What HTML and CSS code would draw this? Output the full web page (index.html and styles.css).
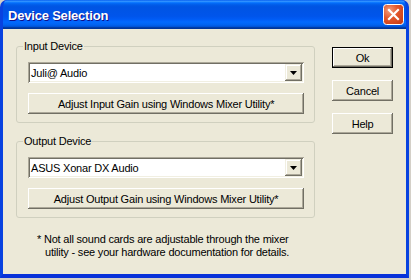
FILE: index.html
```html
<!DOCTYPE html>
<html lang="en">
<head>
  <meta charset="UTF-8">
  <title>Device Selection</title>
  <link rel="stylesheet" href="styles.css">
</head>
<body>
  <div class="window">
    <div class="titlebar">
      <span class="title">Device Selection</span>
      <button class="close" title="Close">
        <svg width="21" height="21" viewBox="0 0 21 21">
          <defs>
            <radialGradient id="closeBg" cx="0.3" cy="0.3" r="0.9">
              <stop offset="0" stop-color="#f39d7d"/>
              <stop offset="0.45" stop-color="#e2572c"/>
              <stop offset="1" stop-color="#c73a13"/>
            </radialGradient>
          </defs>
          <rect x="0.5" y="0.5" width="20" height="20" rx="3" fill="url(#closeBg)" stroke="#fff"/>
          <path d="M6 6 L15 15 M15 6 L6 15" stroke="#fff" stroke-width="2.2" stroke-linecap="square"/>
        </svg>
      </button>
    </div>

    <div class="client">
      <div class="groups">
        <fieldset class="group">
          <legend>Input Device</legend>
          <div class="combo">
            <span class="combo-value">Juli@ Audio</span>
            <span class="combo-arrow">
              <svg width="7" height="4" viewBox="0 0 7 4"><path d="M0 0 H7 L3.5 4 Z" fill="#000"/></svg>
            </span>
          </div>
          <button class="btn wide">Adjust Input Gain using Windows Mixer Utility*</button>
        </fieldset>

        <fieldset class="group">
          <legend>Output Device</legend>
          <div class="combo">
            <span class="combo-value">ASUS Xonar DX Audio</span>
            <span class="combo-arrow">
              <svg width="7" height="4" viewBox="0 0 7 4"><path d="M0 0 H7 L3.5 4 Z" fill="#000"/></svg>
            </span>
          </div>
          <button class="btn wide">Adjust Output Gain using Windows Mixer Utility*</button>
        </fieldset>

        <p class="note">* Not all sound cards are adjustable through the mixer<br><span class="indent">utility - see your hardware documentation for details.</span></p>
      </div>

      <div class="actions">
        <button class="btn default">Ok</button>
        <button class="btn">Cancel</button>
        <button class="btn">Help</button>
      </div>
    </div>
  </div>
</body>
</html>
```

FILE: styles.css
```css
/* classic XP dialog */
* {
  box-sizing: border-box;
}

html {
  background-color: #d4d0c8;
}

body {
  margin: 0;
  font-family: "Liberation Sans", Arial, sans-serif;
  font-size: 11px;
  letter-spacing: -0.2px;
  color: #000;
}

.window {
  width: 409px;
  height: 278px;
  display: flex;
  flex-direction: column;
  background-color: #0831d9;
  border-radius: 7px 7px 0 0;
  border-left: 3px solid #0842e0;
  border-right: 3px solid #0842e0;
  border-bottom: 4px solid #0831d9;
  overflow: hidden;
}

.titlebar {
  height: 29px;
  margin: 0 -3px;
  padding: 0 5px 0 8px;
  display: flex;
  align-items: center;
  justify-content: space-between;
  background: linear-gradient(to bottom, #0058ee 0%, #3593ff 4%, #288eff 6%, #127dff 8%, #036ffc 10%, #0262ee 14%, #0057e5 20%, #0054e3 24%, #0055eb 56%, #005bf5 66%, #026afe 76%, #0062ef 86%, #0052d6 92%, #0040ab 94%, #003092 100%);
}

.title {
  color: #fff;
  font-weight: bold;
  font-size: 13px;
  letter-spacing: -0.2px;
  text-shadow: 1px 1px #0f1089;
  padding-top: 1px;
}

.close {
  width: 21px;
  height: 21px;
  padding: 0;
  border: none;
  background: none;
  display: block;
}

.close svg {
  display: block;
}

.client {
  flex: 1;
  display: flex;
  gap: 17px;
  padding: 11px 13px 0 13px;
  background-color: #ece9d8;
}

.groups {
  width: 300px;
  display: flex;
  flex-direction: column;
}

.group {
  margin: 0 0 12px 0;
  padding: 9px 10px 8px 11px;
  border: 1px solid #d0d0bf;
  border-radius: 3px;
  display: flex;
  flex-direction: column;
  gap: 10px;
}

.group legend {
  padding: 0 1px;
  margin-left: -5px;
  line-height: 13px;
}

.combo {
  height: 21px;
  display: flex;
  align-items: center;
  background-color: #fff;
  padding: 2px;
  box-shadow: inset 1px 1px #aca899, inset -1px -1px #fff, inset 2px 2px #716f64, inset -2px -2px #f1efe2;
}

.combo-value {
  flex: 1;
  padding-left: 1px;
}

.combo-arrow {
  width: 17px;
  height: 17px;
  display: flex;
  align-items: center;
  justify-content: center;
  background-color: #ece9d8;
  box-shadow: inset -1px -1px #716f64, inset 1px 1px #f1efe2, inset -2px -2px #aca899, inset 2px 2px #fff;
}

.combo-arrow svg {
  display: block;
  margin-top: 1px;
}

.btn {
  height: 21px;
  padding: 0;
  border: none;
  font-family: inherit;
  font-size: 11px;
  letter-spacing: -0.2px;
  color: #000;
  background-color: #ece9d8;
  box-shadow: inset -1px -1px #716f64, inset 1px 1px #fff, inset -2px -2px #aca899;
}

.btn.wide {
  width: 100%;
}

.btn.default {
  border: 1px solid #000;
}

.actions {
  width: 61px;
  padding-top: 7px;
  display: flex;
  flex-direction: column;
  gap: 12px;
}

.note {
  margin: 3px 0 0 21px;
  line-height: 13px;
}

.note .indent {
  padding-left: 8px;
}
```
